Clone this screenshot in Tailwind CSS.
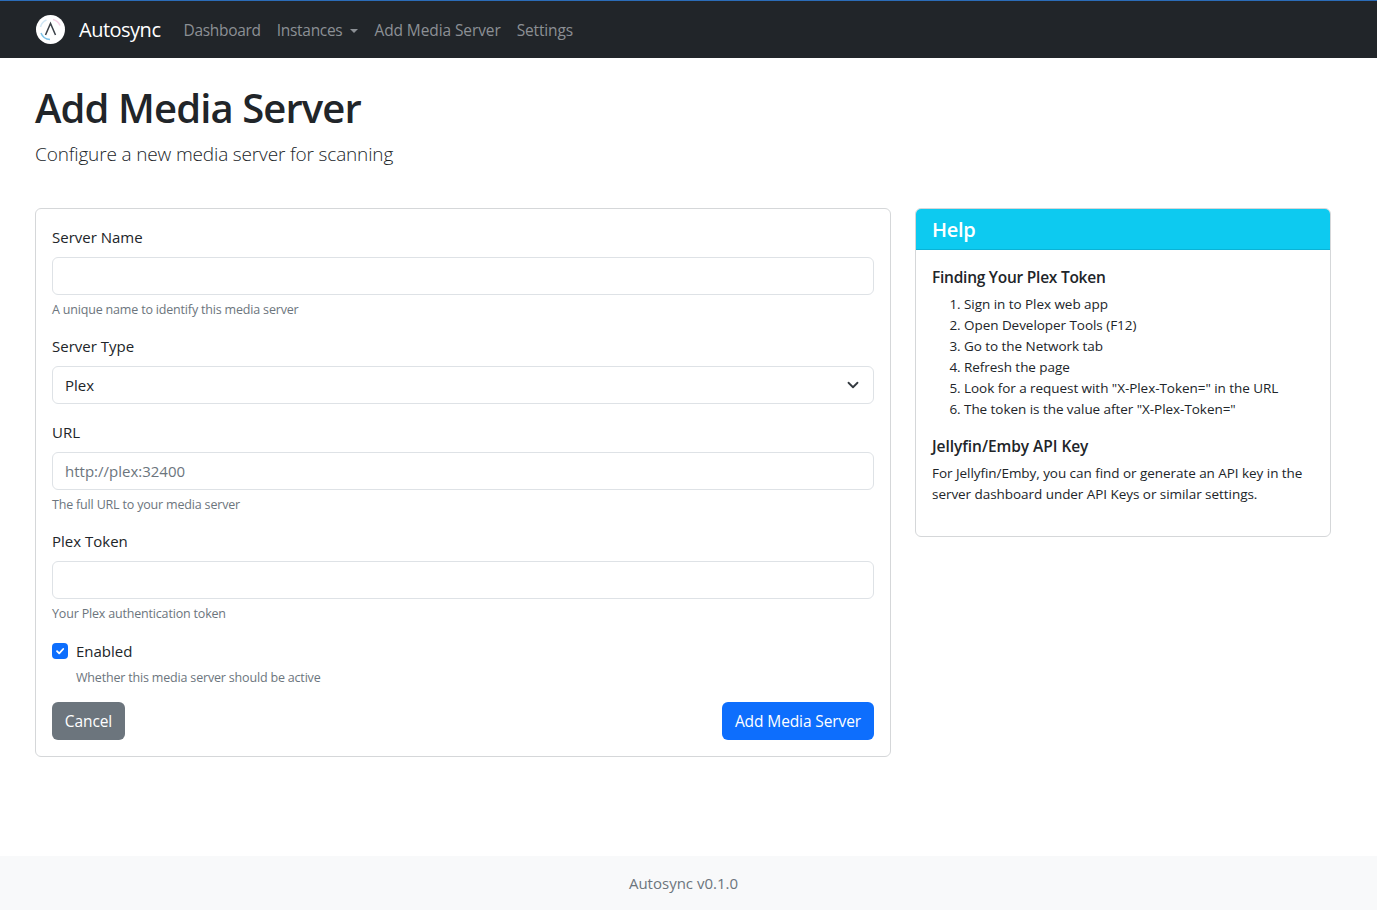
<!DOCTYPE html>
<html lang="en">
<head>
    <meta charset="UTF-8">
    <meta name="viewport" content="width=device-width, initial-scale=1.0">
    <title>Autosync</title>
    <script src="https://cdn.jsdelivr.net/npm/@tailwindcss/browser@4"></script>
</head>
<body class="bg-white min-h-screen flex flex-col text-[#212529] font-['Open_Sans',sans-serif] text-[15px]">
    <!-- Navbar -->
    <nav class="h-[58px] bg-[#212529] border-t border-[#2b6cb8] flex items-center pl-[35px]">
        <svg class="w-[31px] h-[31px] mr-[13px]" viewBox="0 0 31 31">
            <circle cx="15.5" cy="15.5" r="14.5" fill="#fff"/>
            <path d="M5.500 13a10 10 0 0 1 6-7" fill="none" stroke="#cfe6f5" stroke-width="1.5"/>
            <path d="M18 5.500a10 10 0 0 1 7 6" fill="none" stroke="#f5d3e6" stroke-width="1.5"/>
            <path d="M6 19a10 10 0 0 0 9 6.500" fill="none" stroke="#7cc4ea" stroke-width="1.5"/>
            <path d="M10.500 21l5-11.500 5 11.500" fill="none" stroke="#3b4148" stroke-width="1.500"/>
        </svg>
        <a class="text-white text-[20px] tracking-[-0.5px] mr-[23px]">Autosync</a>
        <div class="flex items-center gap-[16px] mt-[2px] text-[#8c9095] text-[15.500px] tracking-[-0.3px]">
            <a>Dashboard</a>
            <a class="flex items-center">Instances<span class="ml-[8px] w-0 h-0 border-x-[4px] border-x-transparent border-t-[4px] border-t-[#8c9095]"></span></a>
            <a class="tracking-[-0.1px]">Add Media Server</a>
            <a class="tracking-[-0.15px]">Settings</a>
        </div>
    </nav>

    <main class="flex-1 px-[35px]">
        <h1 class="text-[40px] leading-[48px] font-semibold mt-[26px] tracking-[-0.9px]">Add Media Server</h1>
        <p class="text-[19px] leading-[30px] font-light mt-[7px] tracking-[-0.15px]">Configure a new media server for scanning</p>

        <div class="flex items-start gap-[24px] mt-[39px]">
            <!-- Form card -->
            <form class="w-[856px] h-[549px] border border-[#d5d7d9] rounded-[6px] p-[16px]">
                <label class="block leading-[24px]">Server Name</label>
                <input type="text" class="block w-full h-[38px] mt-[8px] border border-[#dee2e6] rounded-[6px] px-[12px]">
                <p class="text-[12.500px] tracking-[-0.18px] leading-[20px] text-[#6c757d] mt-[5px]">A unique name to identify this media server</p>

                <label class="block leading-[24px] mt-[14px]">Server Type</label>
                <div class="flex items-center justify-between h-[38px] mt-[8px] border border-[#dee2e6] rounded-[6px] pl-[12px] pr-[14px]">
                    <span>Plex</span>
                    <svg class="w-[12px] h-[12px]" viewBox="0 0 16 16"><path d="M2 5l6 6 6-6" fill="none" stroke="#343a40" stroke-width="2.400" stroke-linecap="round" stroke-linejoin="round"/></svg>
                </div>

                <label class="block leading-[24px] mt-[16px]">URL</label>
                <input type="text" value="http://plex:32400" class="block w-full h-[38px] mt-[8px] border border-[#dee2e6] rounded-[6px] px-[12px] text-[#6c757d]">
                <p class="text-[12.500px] tracking-[-0.18px] leading-[20px] text-[#6c757d] mt-[5px]">The full URL to your media server</p>

                <label class="block leading-[24px] mt-[14px]">Plex Token</label>
                <input type="text" class="block w-full h-[38px] mt-[8px] border border-[#dee2e6] rounded-[6px] px-[12px]">
                <p class="text-[12.500px] tracking-[-0.18px] leading-[20px] text-[#6c757d] mt-[5px]">Your Plex authentication token</p>

                <div class="flex items-center mt-[15px] h-[24px]">
                    <span class="w-[16px] h-[16px] bg-[#0d6efd] rounded-[4px] flex items-center justify-center">
                        <svg class="w-[12px] h-[12px]" viewBox="0 0 12 12"><path d="M3 6.200l2.200 2.200 4-4.400" fill="none" stroke="#fff" stroke-width="1.800" stroke-linecap="round" stroke-linejoin="round"/></svg>
                    </span>
                    <span class="ml-[8px]">Enabled</span>
                </div>
                <p class="text-[12.500px] tracking-[-0.18px] leading-[20px] text-[#6c757d] ml-[24px] mt-[5px]">Whether this media server should be active</p>

                <div class="flex justify-between mt-[14px] text-[15.500px] tracking-[-0.1px]">
                    <button type="button" class="h-[38px] w-[73px] pt-[1px] bg-[#6c757d] text-white rounded-[6px]">Cancel</button>
                    <button type="button" class="h-[38px] w-[152px] pt-[1px] bg-[#0d6efd] text-white rounded-[6px]">Add Media Server</button>
                </div>
            </form>

            <!-- Help card -->
            <aside class="w-[416px] h-[329px] border border-[#d5d7d9] rounded-[6px] overflow-hidden">
                <h2 class="h-[41px] bg-[#0dcaf0] border-b border-[#0ab3d6] px-[16px] text-white text-[20px] font-semibold tracking-[-0.3px] leading-[42px]">Help</h2>
                <div class="p-[16px] text-[13.500px] tracking-[-0.05px] leading-[21px]">
                    <h3 class="text-[15.500px] font-semibold tracking-[-0.25px] leading-[22px]">Finding Your Plex Token</h3>
                    <ol class="list-decimal pl-[32px] mt-[6px]">
                        <li>Sign in to Plex web app</li>
                        <li>Open Developer Tools (F12)</li>
                        <li>Go to the Network tab</li>
                        <li>Refresh the page</li>
                        <li>Look for a request with "X-Plex-Token=" in the URL</li>
                        <li>The token is the value after "X-Plex-Token="</li>
                    </ol>
                    <h3 class="text-[15.500px] font-semibold tracking-[-0.05px] leading-[22px] mt-[15px]">Jellyfin/Emby API Key</h3>
                    <p class="mt-[6px]">For Jellyfin/Emby, you can find or generate an API key in the server dashboard under API Keys or similar settings.</p>
                </div>
            </aside>
        </div>
    </main>

    <footer class="h-[54px] bg-[#f8f9fa] flex items-center justify-center text-[#6c757d] pr-[10px] pt-[1px]">
        <span>Autosync v0.1.0</span>
    </footer>
</body>
</html>
